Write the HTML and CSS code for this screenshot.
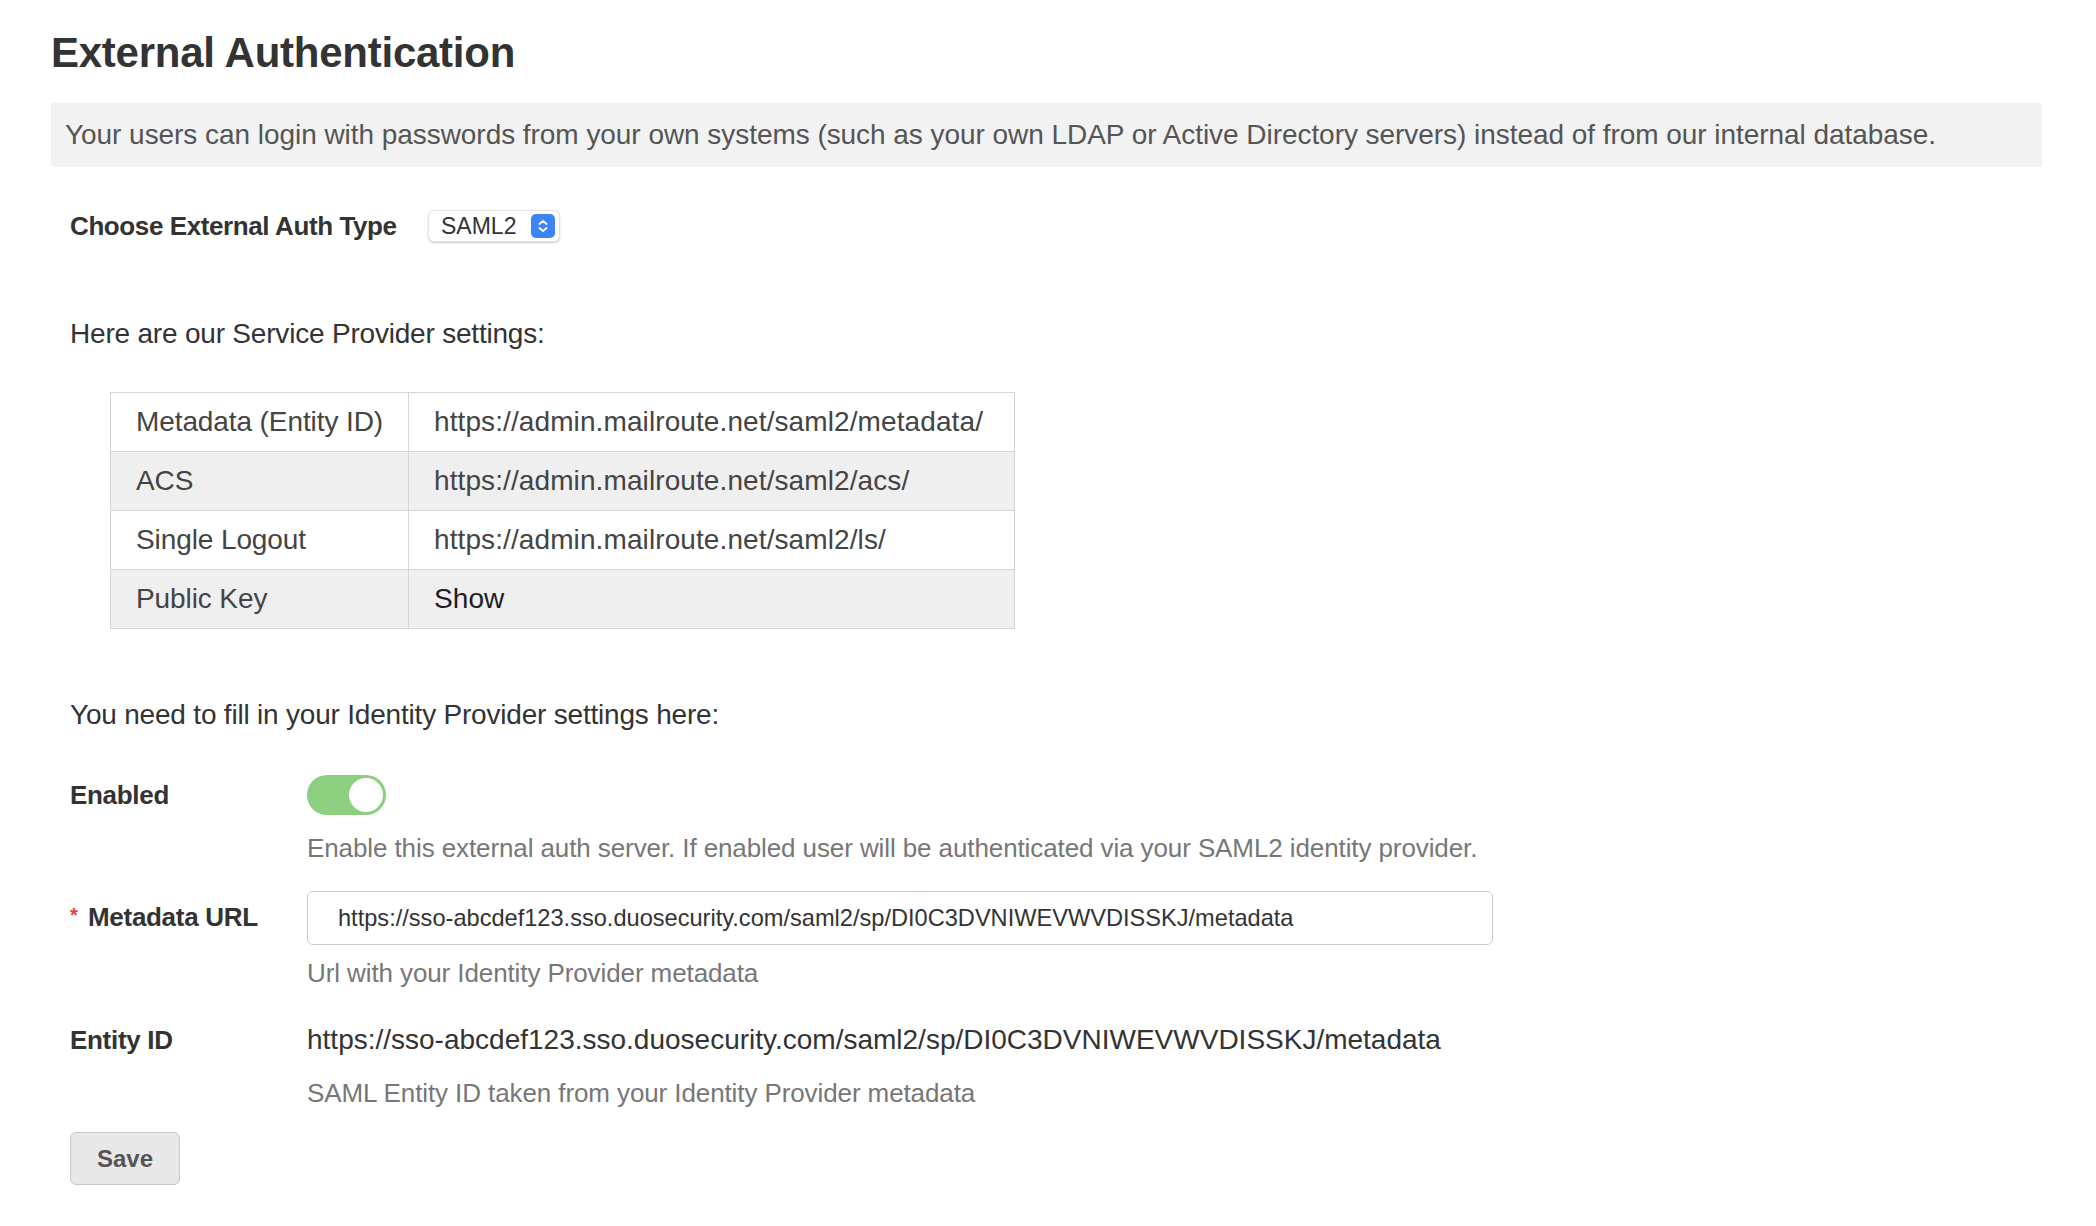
FILE: index.html
```html
<!DOCTYPE html>
<html lang="en">
<head>
<meta charset="utf-8">
<title>External Authentication</title>
<link rel="stylesheet" href="styles.css">
</head>
<body>
<div class="page">
  <h1 class="title">External Authentication</h1>
  <div class="intro">Your users can login with passwords from your own systems (such as your own LDAP or Active Directory servers) instead of from our internal database.</div>
  <div class="content">
    <div class="auth-type">
      <span class="auth-label">Choose External Auth Type</span>
      <div class="select">
        <span class="select-text">SAML2</span>
        <svg class="stepper" width="24" height="24" viewBox="0 0 24 24">
          <rect x="0" y="0" width="24" height="24" rx="5" fill="#3d84f6"/>
          <path d="M8.5 10 L12 6.8 L15.5 10" fill="none" stroke="#fff" stroke-width="1.8" stroke-linecap="round" stroke-linejoin="round"/>
          <path d="M8.5 14 L12 17.2 L15.5 14" fill="none" stroke="#fff" stroke-width="1.8" stroke-linecap="round" stroke-linejoin="round"/>
        </svg>
      </div>
    </div>

    <p class="para para-sp">Here are our Service Provider settings:</p>

    <table class="sp-table">
      <colgroup><col class="col-key"><col class="col-val"></colgroup>
      <tbody>
        <tr><td>Metadata (Entity ID)</td><td class="val">https://admin.mailroute.net/saml2/metadata/</td></tr>
        <tr class="alt"><td>ACS</td><td class="val">https://admin.mailroute.net/saml2/acs/</td></tr>
        <tr><td>Single Logout</td><td class="val">https://admin.mailroute.net/saml2/ls/</td></tr>
        <tr class="alt"><td>Public Key</td><td class="val"><a class="show-link" href="#">Show</a></td></tr>
      </tbody>
    </table>

    <p class="para para-idp">You need to fill in your Identity Provider settings here:</p>

    <div class="field field-enabled">
      <div class="field-label label-enabled">Enabled</div>
      <div class="field-control">
        <span class="toggle"><span class="knob"></span></span>
        <div class="help help-enabled">Enable this external auth server. If enabled user will be authenticated via your SAML2 identity provider.</div>
      </div>
    </div>

    <div class="field field-url">
      <div class="field-label label-url"><span class="req">*</span>Metadata URL</div>
      <div class="field-control">
        <input class="text-input" type="text" value="https://sso-abcdef123.sso.duosecurity.com/saml2/sp/DI0C3DVNIWEVWVDISSKJ/metadata">
        <div class="help help-url">Url with your Identity Provider metadata</div>
      </div>
    </div>

    <div class="field field-entity">
      <div class="field-label label-entity">Entity ID</div>
      <div class="field-control">
        <div class="entity-value">https://sso-abcdef123.sso.duosecurity.com/saml2/sp/DI0C3DVNIWEVWVDISSKJ/metadata</div>
        <div class="help help-entity">SAML Entity ID taken from your Identity Provider metadata</div>
      </div>
    </div>

    <button class="save-btn" type="button">Save</button>
  </div>
</div>
</body>
</html>
```

FILE: styles.css
```css
html, body {
  margin: 0;
  padding: 0;
  background: #ffffff;
}

body {
  font-family: "Liberation Sans", Arial, Helvetica, sans-serif;
  color: #333333;
}

.page {
  padding: 28px 54px 40px 51px;
}

.title {
  margin: 0;
  font-size: 42px;
  line-height: 50px;
  font-weight: bold;
  color: #333333;
  letter-spacing: -0.25px;
}

.intro {
  margin-top: 25px;
  background: #f2f2f2;
  border-radius: 3px;
  padding: 16px 14px;
  font-size: 28px;
  line-height: 32px;
  color: #555555;
  letter-spacing: -0.05px;
}

.content {
  padding-left: 19px;
}

.auth-type {
  display: flex;
  align-items: center;
  margin-top: 43px;
  height: 32px;
}

.auth-label {
  font-size: 26px;
  font-weight: bold;
  color: #333333;
  width: 358px;
  letter-spacing: -0.4px;
}

.select {
  box-sizing: border-box;
  width: 132px;
  height: 32px;
  display: flex;
  align-items: center;
  justify-content: space-between;
  padding: 0 4px 0 12px;
  background: #ffffff;
  border: 1px solid #e2e2e2;
  border-radius: 6px;
  box-shadow: 0 1px 2px rgba(0, 0, 0, 0.22);
}

.select-text {
  font-size: 23px;
  color: #333333;
}

.stepper {
  display: block;
}

.para {
  margin: 0;
  font-size: 28px;
  line-height: 40px;
  color: #333333;
  letter-spacing: -0.2px;
}

.para-sp {
  margin-top: 72px;
}

.sp-table {
  margin-top: 38px;
  margin-left: 40px;
  border-collapse: collapse;
  table-layout: fixed;
  width: 904px;
  font-size: 28px;
  color: #444444;
}

.col-key {
  width: 298px;
}

.col-val {
  width: 606px;
}

.sp-table td {
  border: 1px solid #d5d5d5;
  height: 58px;
  padding: 0 0 0 25px;
  white-space: nowrap;
  vertical-align: middle;
  letter-spacing: -0.1px;
}

.sp-table td.val {
  letter-spacing: 0.1px;
}

.sp-table tr.alt td {
  background: #efefef;
}

.show-link {
  color: #1e1e1e;
  text-decoration: none;
}

.para-idp {
  margin-top: 66px;
}

.field {
  display: grid;
  grid-template-columns: 237px 1fr;
}

.field-label {
  font-size: 26px;
  font-weight: bold;
  color: #333333;
  letter-spacing: -0.3px;
}

.field-enabled {
  margin-top: 40px;
}

.label-enabled {
  line-height: 40px;
}

.toggle {
  box-sizing: border-box;
  width: 79px;
  height: 40px;
  border-radius: 20px;
  background: #8ccf7e;
  display: flex;
  align-items: center;
  justify-content: flex-end;
  padding-right: 3px;
}

.knob {
  width: 34px;
  height: 34px;
  border-radius: 50%;
  background: #ffffff;
}

.help {
  font-size: 26px;
  line-height: 36px;
  color: #777777;
  letter-spacing: -0.1px;
}

.help-enabled {
  margin-top: 15px;
}

.field-url {
  margin-top: 25px;
}

.label-url {
  line-height: 36px;
  padding-top: 6px;
}

.req {
  color: #e0443c;
  font-size: 20px;
  display: inline-block;
  width: 18px;
  vertical-align: 4px;
}

.text-input {
  display: block;
  box-sizing: border-box;
  width: 1186px;
  height: 54px;
  margin: 0;
  padding: 0 0 0 30px;
  border: 1px solid #cccccc;
  border-radius: 6px;
  background: #ffffff;
  font-family: "Liberation Sans", Arial, Helvetica, sans-serif;
  font-size: 23.6px;
  color: #333333;
  outline: none;
}

.help-url {
  margin-top: 10px;
}

.field-entity {
  margin-top: 29px;
}

.label-entity {
  line-height: 40px;
}

.entity-value {
  font-size: 28px;
  line-height: 40px;
  color: #333333;
}

.help-entity {
  margin-top: 15px;
}

.save-btn {
  display: block;
  margin-top: 21px;
  box-sizing: border-box;
  width: 110px;
  height: 53px;
  padding: 0;
  background: #e8e8e8;
  border: 1px solid #c9c9c9;
  border-radius: 6px;
  font-family: "Liberation Sans", Arial, Helvetica, sans-serif;
  font-size: 24px;
  font-weight: bold;
  color: #555555;
}
```
